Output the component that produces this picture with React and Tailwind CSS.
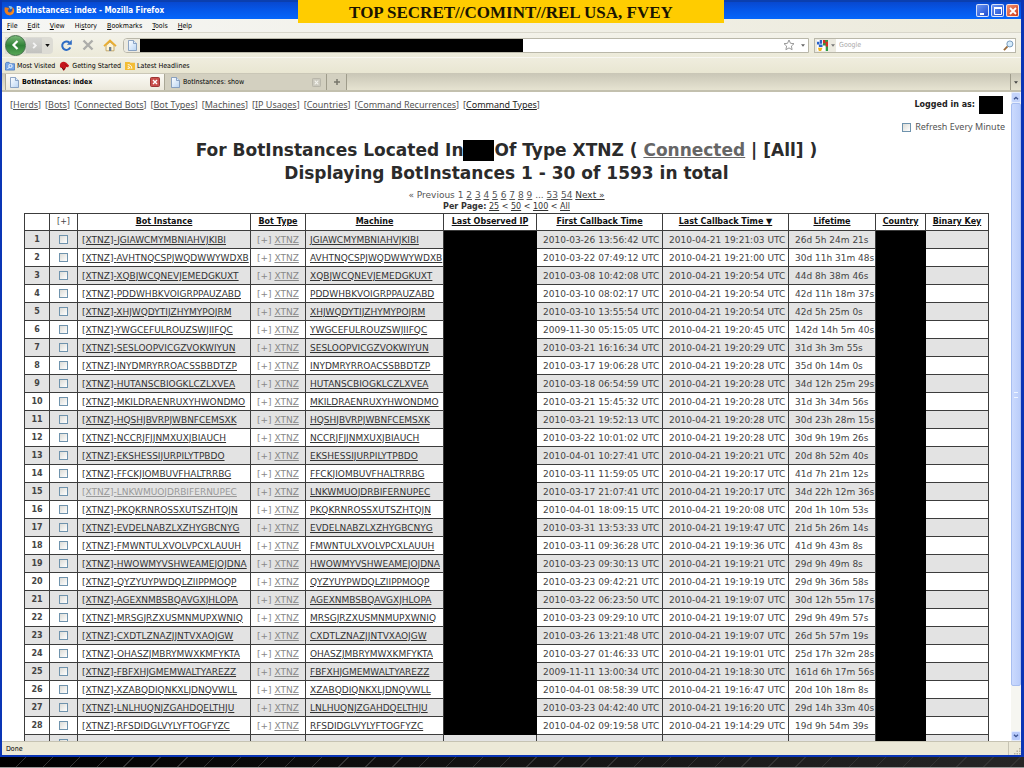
import React from "react";

const rows = [
  ["JGIAWCMYMBNIAHVJKIBI", "2010-03-26 13:56:42", "19:21:03", "26d 5h 24m 21s"],
  ["AVHTNQCSPJWQDWWYWDXB", "2010-03-22 07:49:12", "19:21:00", "30d 11h 31m 48s"],
  ["XQBJWCQNEVJEMEDGKUXT", "2010-03-08 10:42:08", "19:20:54", "44d 8h 38m 46s"],
  ["PDDWHBKVOIGRPPAUZABD", "2010-03-10 08:02:17", "19:20:54", "42d 11h 18m 37s"],
  ["XHJWQDYTIJZHYMYPOJRM", "2010-03-10 13:55:54", "19:20:54", "42d 5h 25m 0s"],
  ["YWGCEFULROUZSWJIIFQC", "2009-11-30 05:15:05", "19:20:45", "142d 14h 5m 40s"],
  ["SESLOOPVICGZVOKWIYUN", "2010-03-21 16:16:34", "19:20:29", "31d 3h 3m 55s"],
  ["INYDMRYRROACSSBBDTZP", "2010-03-17 19:06:28", "19:20:28", "35d 0h 14m 0s"],
  ["HUTANSCBIOGKLCZLXVEA", "2010-03-18 06:54:59", "19:20:28", "34d 12h 25m 29s"],
  ["MKILDRAENRUXYHWONDMO", "2010-03-21 15:45:32", "19:20:28", "31d 3h 34m 56s"],
  ["HQSHJBVRPJWBNFCEMSXK", "2010-03-21 19:52:13", "19:20:28", "30d 23h 28m 15s"],
  ["NCCRJFJJNMXUXJBIAUCH", "2010-03-22 10:01:02", "19:20:28", "30d 9h 19m 26s"],
  ["EKSHESSIJURPILYTPBDO", "2010-04-01 10:27:41", "19:20:21", "20d 8h 52m 40s"],
  ["FFCKJIOMBUVFHALTRRBG", "2010-03-11 11:59:05", "19:20:17", "41d 7h 21m 12s"],
  ["LNKWMUOJDRBIFERNUPEC", "2010-03-17 21:07:41", "19:20:17", "34d 22h 12m 36s"],
  ["PKQKRNROSSXUTSZHTQJN", "2010-04-01 18:09:15", "19:20:08", "20d 1h 10m 53s"],
  ["EVDELNABZLXZHYGBCNYG", "2010-03-31 13:53:33", "19:19:47", "21d 5h 26m 14s"],
  ["FMWNTULXVOLVPCXLAUUH", "2010-03-11 09:36:28", "19:19:36", "41d 9h 43m 8s"],
  ["HWOWMYVSHWEAMEJOJDNA", "2010-03-23 09:30:13", "19:19:21", "29d 9h 49m 8s"],
  ["QYZYUYPWDQLZIIPPMOQP", "2010-03-23 09:42:21", "19:19:19", "29d 9h 36m 58s"],
  ["AGEXNMBSBQAVGXJHLOPA", "2010-03-22 06:23:50", "19:19:07", "30d 12h 55m 17s"],
  ["MRSGJRZXUSMNMUPXWNIQ", "2010-03-23 09:29:10", "19:19:07", "29d 9h 49m 57s"],
  ["CXDTLZNAZJJNTVXAOJGW", "2010-03-26 13:21:48", "19:19:07", "26d 5h 57m 19s"],
  ["OHASZJMBRYMWXKMFYKTA", "2010-03-27 01:46:33", "19:19:01", "25d 17h 32m 28s"],
  ["FBFXHJGMEMWALTYAREZZ", "2009-11-11 13:00:34", "19:18:30", "161d 6h 17m 56s"],
  ["XZABQDIQNKXLJDNQVWLL", "2010-04-01 08:58:39", "19:16:47", "20d 10h 18m 8s"],
  ["LNLHUQNJZGAHDQELTHJU", "2010-03-23 04:42:40", "19:16:20", "29d 14h 33m 40s"],
  ["RFSDIDGLVYLYFTOGFYZC", "2010-04-02 09:19:58", "19:14:29", "19d 9h 54m 39s"],
];

const navLinks = ["Herds", "Bots", "Connected Bots", "Bot Types", "Machines", "IP Usages", "Countries", "Command Recurrences", "Command Types"];
const border = "border border-[#3c3c3c]";
const cell = `${border} p-0 pl-[6px]`;
const nameCell = `${border} p-0 pl-1`;
const centered = `${border} p-0 text-center`;

function Link({ children, className = "" }) {
  return <a href="#" className={`underline ${className}`}>{children}</a>;
}

function Check({ label }) {
  return (
    <input
      type="checkbox"
      aria-label={label}
      className="block size-[9px] shrink-0 appearance-none border border-[#6f93ad] bg-linear-to-br from-[#dcdcd7] to-white"
    />
  );
}

function PageIcon({ className = "" }) {
  return (
    <svg viewBox="0 0 9 11" className={`h-[11px] w-[9px] shrink-0 ${className}`} aria-hidden="true">
      <defs>
        <linearGradient id="sheet" x1="0" y1="0" x2="1" y2="1">
          <stop offset="0" stopColor="#fff" />
          <stop offset="1" stopColor="#b8d4f4" />
        </linearGradient>
      </defs>
      <path d="M.5.5h5l3 3v7h-8z" fill="url(#sheet)" stroke="#7391b8" strokeWidth=".8" />
      <path d="M5.5.5v3h3" fill="#dceafa" stroke="#7391b8" strokeWidth=".8" />
    </svg>
  );
}

function FirefoxIcon() {
  return (
    <svg viewBox="0 0 12 12" className="size-[11px] shrink-0" aria-hidden="true">
      <circle cx="6" cy="6" r="5" fill="#2458b8" />
      <path d="M5 1.5c2-.8 4 .2 4.5 2L7 4.5z" fill="#7fc0f0" />
      <path d="M1 2.2C2 3 3.400 2.600 4.600 3.300L6 4.400 4.300 5.200c-.6 2 1 3.300 2.700 2.800C9 7.500 9.400 5 8.800 2.300 11 3.500 11.600 5.500 11 7.700c-.8 2.500-3 3.800-5.300 3.600C2 11-.6 7 1 2.200z" fill="#ee7d1c" />
      <path d="M10.500 4c.5 2.800-1 5.200-3.300 5.600 2.500.3 4.200-2.700 3.300-5.600z" fill="#ffd24a" />
    </svg>
  );
}

function TitleBar() {
  const button = "flex size-[13px] items-center justify-center rounded-[2px] border border-white/80";
  return (
    <header className="flex h-[19px] shrink-0 items-center justify-between border-t-2 border-[#0b3fae] bg-linear-to-b from-[#0848cf] via-[#0558ea] to-[#0566fb] pr-[2px] pl-[2px]">
      <div className="flex items-center gap-[1px]">
        <FirefoxIcon />
        <span className="font-['DejaVu_Sans_Condensed','DejaVu_Sans',sans-serif] text-[8px] leading-3 font-bold whitespace-nowrap text-white">BotInstances: index - Mozilla Firefox</span>
      </div>
      <div className="flex gap-[2px]">
        <button aria-label="Minimize" className={`${button} bg-linear-to-br from-[#6c94f2] to-[#1c4bd0]`}>
          <svg viewBox="0 0 10 10" className="size-[10px]"><path d="M2 8h4" stroke="#fff" strokeWidth="2" /></svg>
        </button>
        <button aria-label="Maximize" className={`${button} bg-linear-to-br from-[#6c94f2] to-[#1c4bd0]`}>
          <svg viewBox="0 0 10 10" className="size-[10px]"><path d="M1.500 2h7v6.500h-7z" fill="none" stroke="#fff" /><path d="M1 2h8" stroke="#fff" strokeWidth="2" /></svg>
        </button>
        <button aria-label="Close" className={`${button} bg-linear-to-br from-[#f09070] to-[#cc3511]`}>
          <svg viewBox="0 0 10 10" className="size-[10px]"><path d="M2 2l6 6M8 2L2 8" stroke="#fff" strokeWidth="1.800" /></svg>
        </button>
      </div>
    </header>
  );
}

function Toolbar() {
  return (
    <div className="flex h-6 shrink-0 items-center bg-linear-to-b from-[#f3f2ea] to-[#ecead9] pr-[5px] pl-[3px]">
      <div className="flex h-[17px] items-center rounded-r-[4px] bg-[#dddcd5]">
        <button aria-label="Back" className="flex size-[21px] items-center justify-center rounded-full border border-[#43714a] bg-linear-to-b from-[#79b879] via-[#2f8237] to-[#56a657]">
          <svg viewBox="0 0 12 12" className="size-3"><path d="M7.500 2L3.500 6l4 4" fill="none" stroke="#fff" strokeWidth="2.200" /></svg>
        </button>
        <button aria-label="Forward" className="flex h-[15px] w-4 items-center justify-center bg-linear-to-b from-[#d5d5d2] to-[#c2c2bf]">
          <svg viewBox="0 0 10 10" className="size-[9px]"><path d="M3.500 2l3 3-3 3" fill="none" stroke="#f4f4f4" strokeWidth="2" /></svg>
        </button>
        <button aria-label="Recent pages" className="flex w-[11px] justify-center">
          <svg viewBox="0 0 6 4" className="h-[3px] w-[5px]"><path d="M0 0h6L3 4z" fill="#111" /></svg>
        </button>
      </div>
      <button aria-label="Reload" className="ml-[7px]">
        <svg viewBox="0 0 13 13" className="size-[13px]"><path d="M10.300 8.300A4.200 4.200 0 1 1 9.300 3.600" fill="none" stroke="#2e6cc4" strokeWidth="2" /><path d="M11.800.8v5H6.900z" fill="#2e6cc4" /></svg>
      </button>
      <button aria-label="Stop" className="ml-[9px]">
        <svg viewBox="0 0 12 12" className="size-3"><path d="M1.500 1.500l9 9M10.500 1.500l-9 9" stroke="#adadaa" strokeWidth="2.400" /></svg>
      </button>
      <button aria-label="Home" className="ml-[9px]">
        <svg viewBox="0 0 14 13" className="h-[13px] w-[14px]"><path d="M3 6.500v5.300h8V6.500L7 3z" fill="#fdf4d6" stroke="#b99a56" strokeWidth=".8" /><path d="M1 7.200l6-5.700 6 5.700" fill="none" stroke="#e9ac2f" strokeWidth="1.800" /><path d="M6 8h2.300v4H6z" fill="#6b7d94" /></svg>
      </button>
      <div className="ml-[6px] flex h-[15px] min-w-0 flex-1 items-center rounded-l-[4px] border border-[#b9b7a9] bg-white">
        <span className="flex h-full w-4 shrink-0 items-center justify-center rounded-l-[4px] bg-[#eceae0]"><PageIcon /></span>
        <span className="h-[13px] w-[56%] bg-black" />
        <input aria-label="Address" className="h-3 min-w-0 flex-1 bg-transparent text-[8px] outline-none" />
        <button aria-label="Bookmark this page" className="mr-[6px]">
          <svg viewBox="0 0 12 12" className="size-3"><path d="M6 1l1.500 3.300 3.500.4-2.600 2.400.7 3.600L6 8.900l-3.100 1.800.7-3.600L1 4.700l3.500-.4z" fill="#fff" stroke="#8e8e8e" strokeWidth=".9" /></svg>
        </button>
        <button aria-label="Address history" className="mr-[3px]">
          <svg viewBox="0 0 6 4" className="h-[3px] w-1"><path d="M0 0h6L3 4z" fill="#666" /></svg>
        </button>
      </div>
      <div className="ml-[5px] flex h-[15px] w-[202px] shrink-0 items-center border border-[#b9b7a9] bg-white pr-[1px]">
        <button aria-label="Search engine" className="flex h-full w-[21px] items-center justify-center gap-[3px] bg-[#eceae0]">
          <svg viewBox="0 0 12 12" className="size-[11px]">
            <path fill="#fff" d="M0 0h12v12H0z" />
            <path fill="#2f9a44" d="M6.500 0H12v12H9.500V6h-3z" />
            <path fill="#d62f25" d="M6.500 0H9v3.500H6.500zM9.500 2H12v5H9.500z" />
            <path fill="#2962c8" d="M0 2h2.500v3H0zM3 0h2.500v4H3zM2 5h4v2.500H2z" />
            <path fill="#f3b51d" d="M1 8.500h5L4.500 12H2z" />
          </svg>
          <svg viewBox="0 0 6 4" className="h-[3px] w-1"><path d="M0 0h6L3 4z" fill="#777" /></svg>
        </button>
        <input aria-label="Search" placeholder="Google" className="h-3 min-w-0 flex-1 pl-[3px] font-['DejaVu_Sans_Condensed','DejaVu_Sans',sans-serif] text-[7px] outline-none placeholder:text-[#aaa]" />
        <button aria-label="Search the web">
          <svg viewBox="0 0 12 12" className="size-[11px]"><path d="M1 11l4-4" stroke="#9a6a3a" strokeWidth="2" /><circle cx="7.500" cy="4.300" r="3.300" fill="#d6ecfc" stroke="#6f93b6" /></svg>
        </button>
      </div>
    </div>
  );
}

function Bookmarks() {
  return (
    <div className="flex h-4 shrink-0 items-center gap-1 border-t border-[#f8f7f2] bg-linear-to-b from-[#efedde] to-[#e9e6d2] pl-[3px] text-[7px] leading-3 whitespace-nowrap">
      <a href="#" className="flex items-center gap-[2px]">
        <svg viewBox="0 0 11 11" className="size-[10px]"><path d="M.5 2.500l1-1h3l1 1.500h5v7H.5z" fill="#78a8e8" stroke="#3d6fbb" strokeWidth=".8" /><circle cx="6" cy="5.500" r="1.800" fill="none" stroke="#fff" /><path d="M2.500 9L5 6.500" stroke="#fff" /></svg>
        Most Visited
      </a>
      <a href="#" className="flex items-center gap-[2px]">
        <svg viewBox="0 0 12 11" className="h-[10px] w-[11px]"><path d="M1 4c1-3 4-4 7-2l3 3-1 2-2-.5-1 2-2 2.500-1-3-3-1z" fill="#c5161c" /><path d="M3 7l2 3 1-2M7 4l1 1" stroke="#58090c" fill="none" /></svg>
        Getting Started
      </a>
      <a href="#" className="flex items-center gap-[2px]">
        <svg viewBox="0 0 11 11" className="size-[10px]"><path d="M0 1h5l1 1h5v8H0z" fill="#f3bd35" /><path d="M3 4a4.500 4.500 0 0 1 4.500 4.500M3 6a2.500 2.500 0 0 1 2.500 2.500" fill="none" stroke="#fff" /><circle cx="3.500" cy="8" r=".8" fill="#fff" /></svg>
        Latest Headlines
      </a>
    </div>
  );
}

function Tabs() {
  return (
    <div className="flex h-[19px] shrink-0 items-end border-b-2 border-[#c3c0ae] bg-linear-to-b from-[#c9c6b6] to-[#e6e3d1] pl-[3px] text-[7px] leading-3 whitespace-nowrap">
      <button className="flex h-4 w-40 items-center border-r border-l border-[#aaa796] bg-linear-to-b from-[#fbfaf5] to-[#ece9dc] pr-1 pl-1 font-bold">
        <PageIcon className="mr-[3px]" />
        <span className="flex-1 text-left">BotInstances: index</span>
        <svg viewBox="0 0 10 10" className="size-[10px]"><rect x=".5" y=".5" width="9" height="9" rx="1" fill="#c94f4c" stroke="#9b3534" /><path d="M3 3l4 4M7 3L3 7" stroke="#fff" strokeWidth="1.400" /></svg>
      </button>
      <button className="flex h-4 w-[162px] items-center border-r border-[#9f9c8b] bg-[#d3d0c0] pr-[5px] pl-[6px]">
        <PageIcon className="mr-[3px]" />
        <span className="flex-1 text-left">BotInstances: show</span>
        <svg viewBox="0 0 10 10" className="size-[9px]"><rect x=".5" y=".5" width="9" height="9" rx="1" fill="#cbc9be" stroke="#b4b2a6" /><path d="M3 3l4 4M7 3L3 7" stroke="#f4f4ee" strokeWidth="1.200" /></svg>
      </button>
      <button aria-label="New tab" className="flex h-4 w-5 items-center justify-center border-r border-[#9f9c8b] bg-[#d3d0c0]">
        <svg viewBox="0 0 6 6" className="size-[6px]"><path d="M3 0v6M0 3h6" stroke="#77756b" strokeWidth="1.500" /></svg>
      </button>
      <button aria-label="List all tabs" className="ml-auto flex h-4 w-[11px] items-center justify-center border-l border-[#9f9c8b]">
        <svg viewBox="0 0 6 4" className="h-[3px] w-1"><path d="M0 0h6L3 4z" fill="#444" /></svg>
      </button>
    </div>
  );
}

function BotTable() {
  const head = `${border} p-0 font-bold text-[#111]`;
  return (
    <table className="w-full table-fixed border-collapse text-[9px] leading-4 whitespace-nowrap text-[#444]">
      <colgroup>
        <col className="w-[25px]" /><col className="w-[28px]" /><col className="w-[173px]" /><col className="w-[55px]" />
        <col className="w-[138px]" /><col className="w-[93px]" /><col className="w-[126px]" /><col className="w-[126px]" />
        <col className="w-[87px]" /><col className="w-[50px]" /><col />
      </colgroup>
      <thead>
        <tr className="h-[17px] text-[8px]">
          <th className={head}></th>
          <th className={`${border} p-0 font-normal`}>[+]</th>
          <th className={head}><Link>Bot Instance</Link></th>
          <th className={head}><Link>Bot Type</Link></th>
          <th className={head}><Link>Machine</Link></th>
          <th className={head}><Link>Last Observed IP</Link></th>
          <th className={head}><Link>First Callback Time</Link></th>
          <th className={head}><Link>Last Callback Time ▼</Link></th>
          <th className={head}><Link>Lifetime</Link></th>
          <th className={head}><Link>Country</Link></th>
          <th className={head}><Link>Binary Key</Link></th>
        </tr>
      </thead>
      <tbody>
        {rows.map(([name, first, last, life], i) => (
          <tr key={name} className="h-[18px] odd:bg-[#e3e3e3]">
            <td className={`${centered} text-[8px] font-bold`}>{i + 1}</td>
            <td className={centered}><div className="flex justify-center"><Check label={`Select ${name}`} /></div></td>
            <td className={nameCell}><Link className={i === 14 ? "text-[#999]" : "text-[#333]"}>[XTNZ]-{name}</Link></td>
            <td className={`${cell} text-[#888]`}>[+] <Link>XTNZ</Link></td>
            <td className={nameCell}><Link className="text-[#333]">{name}</Link></td>
            <td className="border border-black bg-black p-0"></td>
            <td className={cell}>{first} UTC</td>
            <td className={cell}>2010-04-21 {last} UTC</td>
            <td className={cell}>{life}</td>
            <td className="border border-black bg-black p-0"></td>
            <td className={cell}></td>
          </tr>
        ))}
        <tr className="h-[18px] bg-[#e3e3e3]">
          <td className={centered}></td>
          <td className={centered}><div className="flex justify-center"><Check label="Select next bot" /></div></td>
          <td className={cell}></td><td className={cell}></td><td className={cell}></td><td className={cell}></td>
          <td className={cell}></td><td className={cell}></td><td className={cell}></td>
          <td className="border border-black bg-black p-0"></td>
          <td className={cell}></td>
        </tr>
      </tbody>
    </table>
  );
}

function Page() {
  return (
    <main className="min-w-0 flex-1 overflow-hidden bg-white font-['DejaVu_Sans',sans-serif] text-[9px] leading-3 text-[#555]">
      <div className="flex h-[25px] items-center justify-between pr-2 pl-2">
        <nav className="flex gap-1 font-['Noto_Sans',sans-serif] whitespace-nowrap">
          {navLinks.map((label) => (
            <span key={label}>[<Link className={label === "Command Types" ? "text-[#222]" : ""}>{label}</Link>]</span>
          ))}
        </nav>
        <div className="flex items-center gap-1 text-[8px] font-bold text-[#222]">
          Logged in as:
          <span className="h-[18px] w-6 bg-black" />
        </div>
      </div>
      <label className="flex h-5 items-center justify-end gap-1 pr-[6px] font-['Noto_Sans',sans-serif]">
        <Check label="Refresh Every Minute" />
        Refresh Every Minute
      </label>
      <h1 className="flex flex-col items-center pt-[2px] text-[17px] leading-[23px] font-bold whitespace-nowrap text-[#2b2b2b]">
        <span className="flex items-center">
          For BotInstances Located In
          <span className="h-[21px] w-[31px] bg-black" />
          <span>Of Type XTNZ ( <Link className="text-[#666]">Connected</Link> | [All] )</span>
        </span>
        <span>Displaying BotInstances 1 - 30 of 1593 in total</span>
      </h1>
      <div className="pt-1 text-center">
        <p>
          « Previous 1{" "}
          {["2", "3", "4", "5", "6", "7", "8", "9"].map((n) => <React.Fragment key={n}><Link>{n}</Link> </React.Fragment>)}
          ... <Link>53</Link> <Link>54</Link> <Link className="text-[#333]">Next »</Link>
        </p>
        <p className="text-[8px] text-[#333]"><b>Per Page:</b> <Link>25</Link> &lt; <Link>50</Link> &lt; <Link>100</Link> &lt; <Link>All</Link></p>
      </div>
      <div className="pr-[22px] pl-[22px]"><BotTable /></div>
    </main>
  );
}

function Scrollbar() {
  return (
    <div className="flex w-[10px] shrink-0 flex-col bg-[#f6f6f1]">
      <button aria-label="Scroll up" className="flex h-[11px] items-center justify-center rounded-[2px] border border-[#e5edff] bg-[#c4d4fb]">
        <svg viewBox="0 0 8 6" className="h-1 w-[6px]"><path d="M1 5l3-3 3 3" fill="none" stroke="#3c5390" strokeWidth="2" /></svg>
      </button>
      <div className="flex flex-[13] items-center justify-center rounded-[2px] border border-[#a8bef0] bg-linear-to-r from-[#cbdafe] to-[#bacdfa]">
        <span className="h-[6px] w-1 border-y border-[#eef4ff]" />
      </div>
      <div className="flex-1" />
      <button aria-label="Scroll down" className="flex h-[10px] items-center justify-center rounded-[2px] border border-[#e5edff] bg-[#b7cafa]">
        <svg viewBox="0 0 8 6" className="h-1 w-[6px]"><path d="M1 1l3 3 3-3" fill="none" stroke="#3c5390" strokeWidth="2" /></svg>
      </button>
    </div>
  );
}

export default function App() {
  return (
    <div className="relative flex h-screen flex-col overflow-hidden bg-black font-['DejaVu_Sans_Condensed','DejaVu_Sans',sans-serif] text-black">
      <div className="flex min-h-0 flex-1 flex-col border-r-[3px] border-b-2 border-l-2 border-[#0a35b5] bg-[#ece9d8]">
        <TitleBar />
        <nav className="flex h-[14px] shrink-0 items-center gap-[10px] border-b border-[#d8d6ca] bg-linear-to-r from-[#f6f6f4] to-[#eceadb] pl-[5px] text-[7px] leading-3">
          {["File", "Edit", "View", "History", "Bookmarks", "Tools", "Help"].map((item) => (
            <button key={item} className={item === "History" ? "" : "first-letter:underline"}>
              {item === "History" ? <>Hi<u>s</u>tory</> : item}
            </button>
          ))}
        </nav>
        <Toolbar />
        <Bookmarks />
        <Tabs />
        <div className="flex min-h-0 flex-1">
          <Page />
          <Scrollbar />
        </div>
        <footer className="flex h-[14px] shrink-0 items-center justify-between border-t border-[#c6c3b3] pl-1 text-[7px] leading-3">
          Done
          <span className="flex h-full items-end border-l border-[#c6c3b3] pl-1">
            <svg viewBox="0 0 8 8" className="size-2" aria-hidden="true"><path d="M6 1h1.500v1.500H6zM3.500 3.500H5V5H3.500zM6 3.500h1.500V5H6zM1 6h1.500v1.500H1zM3.500 6H5v1.500H3.500zM6 6h1.500v1.500H6z" fill="#b5b19d" /></svg>
          </span>
        </footer>
      </div>
      <div className="h-[11px] shrink-0 border-b border-[#999] bg-[repeating-linear-gradient(135deg,transparent_0px,transparent_18px,#333_18px,#333_19px),linear-gradient(90deg,#000,#262626)]" />
      <div className="absolute top-0 left-[29.1%] flex h-[23px] w-[41.6%] items-center justify-center bg-[#ffcc00] pt-[3px] font-['Liberation_Serif',serif] text-[17px] leading-5 font-bold whitespace-nowrap text-[#1a1400]">
        TOP SECRET//COMINT//REL USA, FVEY
      </div>
    </div>
  );
}
